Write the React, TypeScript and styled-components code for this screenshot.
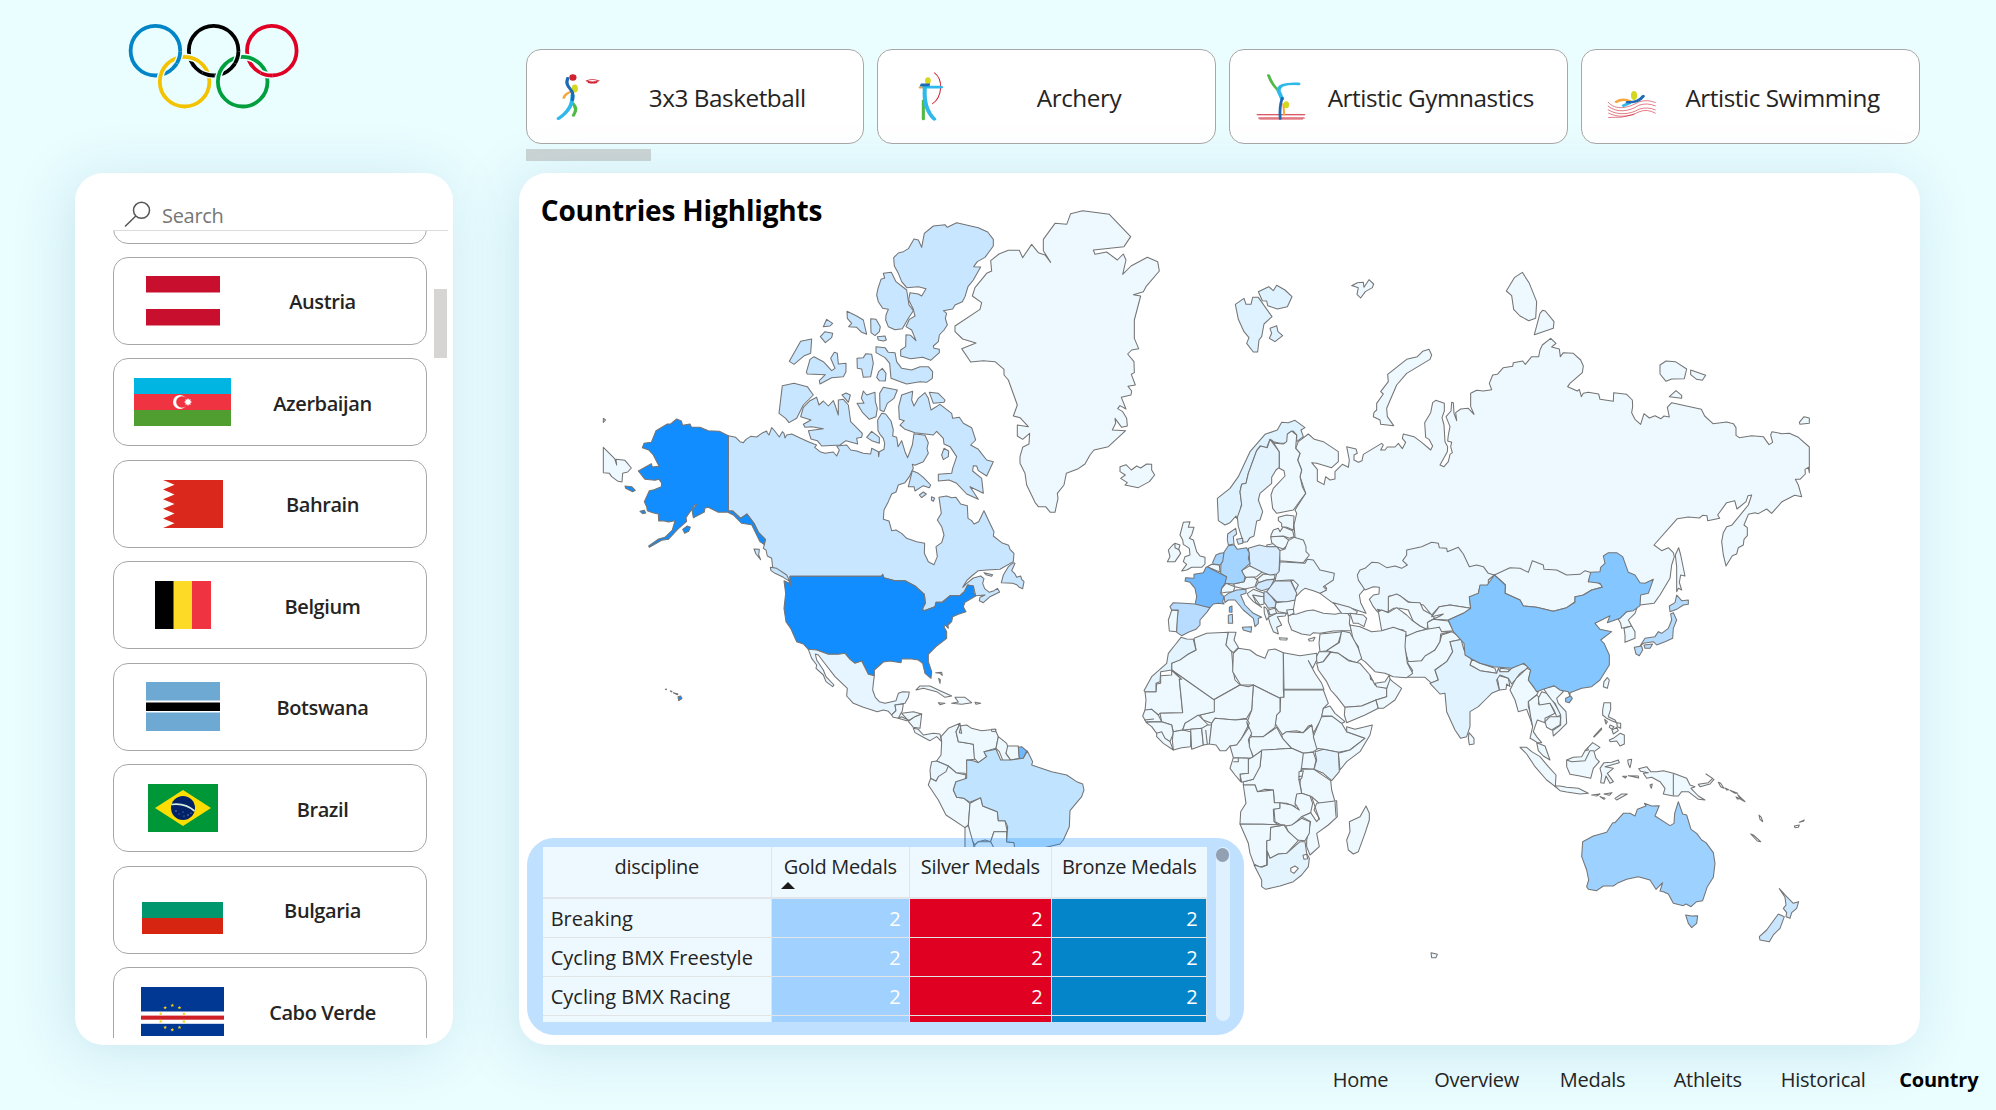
import React from "react";
import styled, { createGlobalStyle } from "styled-components";

const GlobalStyle = createGlobalStyle`
  * { box-sizing: border-box; }
  body {
    margin: 0;
    background: #eafdff;
    font-family: "Open Sans", "Noto Sans", sans-serif;
    color: #252423;
    overflow: hidden;
  }
`;

const Page = styled.main`
  width: 1996px;
  height: 1110px;
  padding-left: 75px;
  display: grid;
  grid-template-columns: 377.7px 66px 1401.3px;
  grid-template-rows: 173px 872px 65px;
  overflow: hidden;
`;

const LogoCell = styled.div`
  padding: 22px 0 0 51px;
`;

const DisciplineStrip = styled.div`
  grid-column: 3;
  padding: 49px 0 0 7px;
`;

const DisciplineRow = styled.div`
  display: grid;
  grid-template-columns: repeat(4, 338.6px);
  column-gap: 13.2px;
`;

const DisciplineCard = styled.button`
  height: 95px;
  padding: 0 0 0 21px;
  display: grid;
  grid-template-columns: 60px 239px;
  align-items: center;
  background: #fff;
  border: 1px solid #a9a7a5;
  border-radius: 15px;
  font: inherit;
  color: inherit;
`;

const DisciplineName = styled.span`
  padding-top: 2px;
  font-size: 24.3px;
  letter-spacing: -0.45px;
  white-space: nowrap;
  text-align: center;
`;

const HorizontalThumb = styled.div`
  width: 125px;
  height: 12px;
  margin-top: 5px;
  background: #cdd5d5;
`;

const Panel = styled.section`
  background: #fff;
  border-radius: 28px;
  box-shadow: -6px 6px 56px rgba(40, 120, 160, 0.17);
`;

const CountryPanel = styled(Panel)`
  grid-row: 2;
  grid-column: 1;
  padding: 21px 5px 7px 38px;
  display: grid;
  grid-template-rows: 37px 807px;
`;

const SearchBar = styled.label`
  display: flex;
  align-items: center;
  padding: 5px 0 0 11px;
  border-bottom: 1px solid #dcdcdc;
`;

const SearchText = styled.span`
  margin-left: 11px;
  padding-top: 3px;
  font-size: 20px;
  letter-spacing: -0.3px;
  line-height: 26px;
  color: #767676;
`;

const CountryScroll = styled.div`
  display: grid;
  grid-template-columns: 314px 14px;
  column-gap: 7px;
  overflow: hidden;
`;

const CountryList = styled.div`
  margin-top: -75.5px;
  height: 883px;
`;

const CountryCard = styled.button`
  width: 314px;
  height: 88px;
  margin-bottom: 13.45px;
  padding: 0;
  display: grid;
  grid-template-columns: 137px 142px;
  align-items: center;
  justify-items: center;
  background: #fff;
  border: 1px solid #a9a7a5;
  border-radius: 15px;
  font: inherit;
  color: inherit;
`;

const CountryName = styled.span`
  padding-top: 2px;
  padding-left: 1px;
  font-size: 20px;
  font-weight: 600;
  letter-spacing: -0.4px;
  white-space: nowrap;
`;

const VerticalThumb = styled.div`
  width: 13px;
  height: 69px;
  margin-top: 58px;
  background: #d6d5d4;
`;

const MapPanel = styled(Panel)`
  grid-row: 2;
  grid-column: 3;
  display: grid;
  grid-template: 872px / 1401px;
`;

const MapTitle = styled.h1`
  grid-area: 1 / 1;
  z-index: 1;
  margin: 17px 0 0 22px;
  font-size: 28px;
  line-height: 40px;
  font-weight: 700;
  letter-spacing: -0.15px;
  color: #000;
`;

const MapCanvas = styled.svg`
  grid-area: 1 / 1;
  stroke: #747474;
  stroke-width: 1.05;
  stroke-linejoin: round;
  path {
    vector-effect: non-scaling-stroke;
  }
`;

const TableCard = styled.div`
  grid-area: 1 / 1;
  align-self: end;
  z-index: 1;
  width: 717px;
  height: 197px;
  margin: 0 0 10px 8px;
  padding: 9px 14px 13px 16px;
  display: flex;
  gap: 9px;
  background: rgba(0, 130, 255, 0.25);
  border-radius: 27px;
`;

const MedalTable = styled.div`
  width: 664px;
  height: 175px;
  overflow: hidden;
  background: #eef9ff;
`;

const TableRow = styled.div<{ $head?: boolean }>`
  display: grid;
  grid-template-columns: 229px 138px 142px 155px;
  grid-template-rows: ${(p) => (p.$head ? "52px" : "39px")};
`;

const HeadCell = styled.div`
  padding-top: 6px;
  font-size: 20px;
  line-height: 28px;
  letter-spacing: -0.3px;
  text-align: center;
  white-space: nowrap;
  border-right: 1px solid #e2e4e6;
  border-bottom: 2px solid #e2e6ea;
  &:last-child { border-right: 0; }
`;

const SortMark = styled.span`
  display: block;
  width: 0;
  margin: 1px 0 0 9px;
  border: 7px solid transparent;
  border-top: 0;
  border-bottom: 7px solid #1b1a19;
`;

const NameCell = styled.div`
  padding: 2px 0 0 8px;
  font-size: 20px;
  line-height: 35px;
  white-space: nowrap;
  border-right: 1px solid #e2e4e6;
  border-bottom: 1px solid #e2e4e6;
`;

const MedalCell = styled.div<{ $tone: string }>`
  padding: 2px 8px 0 0;
  font-size: 20px;
  line-height: 35px;
  text-align: right;
  color: #fff;
  background: ${(p) => p.$tone};
  border-right: 1px solid #e2e4e6;
  border-bottom: 1px solid #e2e4e6;
`;

const TableTrack = styled.div`
  width: 14px;
  height: 174px;
  border-radius: 7px;
  background: #dff1ff;
`;

const TableThumb = styled.div`
  width: 13px;
  height: 14px;
  margin: 1px auto;
  border-radius: 7px;
  background: #91a0b2;
`;

const Nav = styled.nav`
  grid-row: 3;
  grid-column: 3;
  width: 670px;
  padding: 21px 0 0 0;
  margin-left: 814px;
  display: grid;
  grid-template-columns: 101.5px 125.5px 114px 107px 118.5px 90px;
`;

const NavItem = styled.a<{ $active?: boolean }>`
  font-size: 20px;
  line-height: 28px;
  letter-spacing: ${(p) => (p.$active ? "-0.2px" : "-0.25px")};
  font-weight: ${(p) => (p.$active ? 700 : 400)};
  color: ${(p) => (p.$active ? "#000" : "#252423")};
`;

/* Five interlaced rings */
const upperRings = [
  { x: 155.4, c: "#0085c7" },
  { x: 213.6, c: "#000000" },
  { x: 271.8, c: "#df0024" },
];
const lowerRings = [
  { x: 184.6, c: "#f4c300" },
  { x: 242.7, c: "#009f3d" },
];
const overlaps = [
  { ring: 0, x: 179.3, y: 57.5 },
  { ring: 1, x: 208.4, y: 74.8 },
  { ring: 1, x: 237.5, y: 57.5 },
  { ring: 2, x: 266.5, y: 74.8 },
];

function Ring({ x, y, c }: { x: number; y: number; c: string }) {
  return (
    <g fill="none">
      <circle cx={x} cy={y} r="24.8" stroke="#eafdff" strokeWidth="6.6" />
      <circle cx={x} cy={y} r="24.8" stroke={c} strokeWidth="3.8" />
    </g>
  );
}

function Logo() {
  return (
    <svg width="176" height="90" viewBox="126 22 176 90">
      {upperRings.map((r) => <Ring key={r.x} x={r.x} y={50.7} c={r.c} />)}
      {lowerRings.map((r) => <Ring key={r.x} x={r.x} y={81.7} c={r.c} />)}
      {overlaps.map((o, i) => (
        <g key={i}>
          <clipPath id={`over${i}`}><circle cx={o.x} cy={o.y} r="6.5" /></clipPath>
          <g clipPath={`url(#over${i})`}>
            <Ring x={upperRings[o.ring].x} y={50.7} c={upperRings[o.ring].c} />
          </g>
        </g>
      ))}
    </svg>
  );
}

/* Sport pictograms */
const RED = "#cf2130", LIME = "#d3d81f", BLUE = "#1d69b5", SKY = "#2fb9ea", ORANGE = "#f7a63b", GREEN = "#52b947";

const sports = [
  {
    name: "3x3 Basketball",
    art: (
      <g transform="translate(-47.8 -46.5) scale(.4783 .3333)">
        <ellipse cx="152" cy="171" rx="7.5" ry="10" fill={RED} />
        <path d="M180 181Q193 174 206 181Q193 188 180 181M184 186Q193 189 202 186" stroke={RED} strokeWidth="2.5" />
        <ellipse cx="156" cy="204" rx="6.5" ry="12" fill={LIME} />
        <path d="M133 232C135 222 141 217 147 214" stroke={ORANGE} strokeWidth="6" />
        <path d="M150 247C162 262 158 272 153 285" stroke={GREEN} strokeWidth="7" />
        <path d="M151 224C152 256 137 280 122 294" stroke={SKY} strokeWidth="8.5" />
        <path d="M141 173C135 197 149 204 151 217Q153 228 151 238" stroke={BLUE} strokeWidth="7" />
      </g>
    ),
  },
  {
    name: "Archery",
    art: (
      <g transform="translate(-399.9 -46.5) scale(.4783 .3333)">
        <path d="M910 157C930 178 926 230 906 250" stroke={RED} strokeWidth="2.2" />
        <ellipse cx="896.5" cy="181" rx="6" ry="11" fill={LIME} />
        <path d="M880 201L888 201" stroke={ORANGE} strokeWidth="6" />
        <path d="M887 240L887 296" stroke={GREEN} strokeWidth="6.5" />
        <path d="M890 204C888 244 894 274 910 296" stroke={SKY} strokeWidth="8.5" />
        <path d="M889 200H924" stroke={SKY} strokeWidth="8" />
        <path d="M879 198L882 189L901 189L900 197Z" fill={BLUE} />
      </g>
    ),
  },
  {
    name: "Artistic Gymnastics",
    art: (
      <g transform="translate(-51 -46.5) scale(.5076 .3333)">
        <path d="M113 283H206M116 292.5H205" stroke={RED} strokeWidth="3" />
        <path d="M118 296H202" stroke={RED} strokeWidth="1.5" />
        <path d="M135 164Q141 190 153 208" stroke={GREEN} strokeWidth="6" />
        <path d="M194 190Q153 187 155 212L162 236" stroke={SKY} strokeWidth="8" />
        <path d="M164 250L166 283" stroke={ORANGE} strokeWidth="4" />
        <ellipse cx="170" cy="253" rx="5.5" ry="10.5" fill={LIME} />
        <path d="M162 232Q156 260 158 295" stroke={BLUE} strokeWidth="5.5" />
      </g>
    ),
  },
  {
    name: "Artistic Swimming",
    art: (
      <g transform="translate(-403.5 -46.5) scale(.5076 .3333)">
        <path d="M805 245C820 272 845 262 866 244Q882 236 898 246M805 257C822 278 846 274 866 254Q882 246 898 256M805 268C822 284 846 284 866 266Q882 258 898 268M806 278C824 292 846 290 866 274Q882 264 898 278M806 291Q832 294 856 282" stroke={RED} strokeWidth="1.4" />
        <ellipse cx="856" cy="225" rx="6" ry="13.5" fill={LIME} />
        <path d="M821 244Q834 233 848 242" stroke={ORANGE} strokeWidth="7" />
        <path d="M836 255L846 248" stroke={SKY} strokeWidth="8" />
        <path d="M843 245Q864 247 874 227" stroke={BLUE} strokeWidth="7" />
      </g>
    ),
  },
];

function SportIcon({ children }: { children: React.ReactNode }) {
  return (
    <svg width="60" height="60" viewBox="0 0 60 60" fill="none" strokeLinecap="round">
      {children}
    </svg>
  );
}

/* National flags */
function star(cx: number, cy: number, r: number, n: number, inner: number) {
  const pts: string[] = [];
  for (let i = 0; i < n * 2; i++) {
    const a = (Math.PI * i) / n - Math.PI / 2;
    const q = i % 2 ? r * inner : r;
    pts.push(`${(cx + q * Math.cos(a)).toFixed(2)},${(cy + q * Math.sin(a)).toFixed(2)}`);
  }
  return pts.join(" ");
}

const countries: { name: string; w: number; h: number; flag: React.ReactNode }[] = [
  {
    name: "Austria", w: 74, h: 50,
    flag: <><rect width="74" height="16.5" fill="#c8102e" /><rect y="33" width="74" height="16.5" fill="#c8102e" /></>,
  },
  {
    name: "Azerbaijan", w: 97, h: 48,
    flag: (
      <>
        <rect width="97" height="16" fill="#00b5e2" />
        <rect y="16" width="97" height="16" fill="#ef3340" />
        <rect y="32" width="97" height="16" fill="#509e2f" />
        <circle cx="46" cy="24" r="7" fill="#fff" />
        <circle cx="48" cy="24" r="5.8" fill="#ef3340" />
        <polygon points={star(54, 24, 4, 8, 0.6)} fill="#fff" />
      </>
    ),
  },
  {
    name: "Bahrain", w: 81, h: 48,
    flag: <path d="M81 0H21L32.5 4.8L21 9.6L32.5 14.4L21 19.2L32.5 24L21 28.8L32.5 33.6L21 38.4L32.5 43.2L21 48H81Z" fill="#da291c" />,
  },
  {
    name: "Belgium", w: 56, h: 48,
    flag: <><rect width="19" height="48" /><rect x="18.5" width="19" height="48" fill="#fdda25" /><rect x="37" width="19" height="48" fill="#ef3340" /></>,
  },
  {
    name: "Botswana", w: 74, h: 49,
    flag: <><rect width="74" height="18.5" fill="#6da9d2" /><rect y="20.5" width="74" height="8.5" /><rect y="30.5" width="74" height="18.5" fill="#6da9d2" /></>,
  },
  {
    name: "Brazil", w: 70, h: 48,
    flag: (
      <>
        <rect width="70" height="48" fill="#009739" />
        <path d="M7 24L35 6L63 24L35 42Z" fill="#fedd00" />
        <circle cx="35" cy="24" r="12" fill="#012169" />
        <path d="M23.3 20.5Q37 18.5 46.5 27" stroke="#d5ecd9" strokeWidth="1.7" fill="none" />
        <g fill="#8c9cc4">
          <circle cx="28" cy="27" r=".7" /><circle cx="35" cy="28" r=".6" /><circle cx="31" cy="30" r=".6" />
          <circle cx="40" cy="31" r=".7" /><circle cx="36" cy="32" r=".6" /><circle cx="43" cy="29" r=".6" />
        </g>
      </>
    ),
  },
  {
    name: "Bulgaria", w: 81, h: 48,
    flag: <><rect y="16" width="81" height="16" fill="#00966e" /><rect y="32" width="81" height="16" fill="#d62612" /></>,
  },
  {
    name: "Cabo Verde", w: 83, h: 49,
    flag: (
      <>
        <rect width="83" height="49" fill="#003893" />
        <rect y="24.5" width="83" height="12.3" fill="#fff" />
        <rect y="28.6" width="83" height="4.1" fill="#cf2027" />
        {Array.from({ length: 10 }, (_, i) => {
          const a = (i * Math.PI) / 5 - Math.PI / 2;
          return <polygon key={i} points={star(31.3 + 12.2 * Math.cos(a), 30.6 + 12.2 * Math.sin(a), 2, 5, 0.42)} fill="#f7d116" />;
        })}
      </>
    ),
  },
];

/* World map: each group of outlines has its own origin and is drawn at three units to the pixel */
const LAND = "#eef9ff", USA = "#118dff", CAN = "#c8e6ff", CHN = "#84c6ff", FRA = "#70b9ff", GER = "#a3d3ff",
  AUS = "#9dd1ff", BRA = "#c0e4ff", JPN = "#b5dcff", ESP = "#b8dcff", NOR = "#def2ff", SWE = "#e3f4ff",
  POL = "#d8edff", NZL = "#cae6ff", IND = "#e1f3ff", PALE = "#e8f6ff";

type MapGroup = { origin: [number, number]; fills: [string, string[]][]; lines?: string[] };

const mapGroups: MapGroup[] = [
  {
    origin: [590, 190],
    fills: [
      [CAN, [
        "415 737 437 742 450 755 460 758 468 748 482 739 500 741 515 730 530 723 532 729 537 735 545 713 552 720 568 741 577 725 582 730 585 744 590 735 605 732 632 745 655 755 672 762 680 765 674 772 690 785 705 790 730 786 740 798 748 780 740 768 770 765 782 780 800 783 820 790 842 792 845 775 865 785 866 800 868 785 882 778 884 760 880 745 870 733 864 722 863 690 875 670 887 672 903 693 910 720 908 738 920 742 924 770 935 752 945 785 953 803 967 765 972 731 1005 736 1015 758 1011 775 1015 790 1000 815 975 826 967 823 970 835 958 860 945 878 925 885 918 906 905 912 895 935 882 960 880 988 897 993 905 1022 918 1020 935 1030 950 1045 980 1055 1004 1060 1003 1090 1015 1115 1032 1124 1042 1100 1038 1070 1055 1058 1062 1035 1055 1010 1042 990 1054 970 1047 922 1070 918 1085 923 1098 922 1112 942 1132 947 1134 985 1145 992 1152 1002 1166 995 1182 962 1195 990 1212 1025 1210 1038 1235 1058 1256 1066 1260 1078 1272 1090 1270 1115 1230 1138 1190 1140 1165 1142 1145 1158 1130 1172 1118 1192 1130 1180 1150 1164 1172 1158 1182 1166 1178 1180 1184 1196 1198 1207 1212 1202 1222 1195 1229 1206 1200 1220 1180 1238 1168 1232 1170 1222 1185 1215 1157 1217 1150 1188 1133 1185 1123 1205 1110 1217 1080 1217 1055 1237 1038 1237 1035 1250 1000 1263 998 1255 1006 1240 1003 1213 975 1188 945 1172 915 1172 880 1163 878 1153 875 1159 600 1159 600 1185 597 1170 585 1155 548 1132 545 1105 532 1098 528 1080 520 1075 523 1064 526 1048 506 1028 492 1000 471 972 452 985 428 963 415 962",
        "541 1132 560 1135 590 1155 600 1175 580 1162 555 1150 543 1142", "492 1077 508 1078 506 1095 512 1109 498 1092",
        "1234 1178 1240 1155 1255 1130 1270 1118 1275 1120 1265 1142 1275 1152 1280 1162 1292 1158 1295 1168 1302 1175 1298 1196 1288 1192 1280 1184 1268 1180",
        "1182 1148 1208 1154 1205 1159 1188 1154",
        "1100 98 1165 113 1193 126 1210 148 1210 168 1185 202 1162 215 1151 230 1172 231 1150 270 1134 290 1125 320 1117 335 1095 345 1088 357 1060 362 1070 370 1066 385 1072 405 1062 420 1048 435 1045 455 1030 468 1032 475 1048 478 1048 488 1022 511 998 502 962 506 932 498 932 480 947 470 948 434 962 436 978 452 965 420 948 410 958 388 975 378 970 358 956 330 960 308 985 312 995 318 1008 296 985 290 950 293 935 275 925 250 913 228 911 203 925 189 940 185 955 176 972 147 985 150 995 172 1003 130 1030 108 1065 104 1072 112",
        "880 250 904 247 918 275 950 300 957 345 970 362 955 385 937 416 915 419 895 410 887 390 888 375 895 358 878 355 865 335 860 315 864 295 873 268 884 264",
        "771 364 800 378 820 390 830 433 815 427 800 412 776 410 785 400 772 385", "842 386 858 388 871 410 868 425 855 437 843 428",
        "862 440 885 438 889 450 880 453 865 450", "710 388 728 400 720 408 700 410", "705 425 728 430 725 443 706 458 691 440",
        "632 454 665 447 662 490 643 497 612 523 598 514",
        "672 500 700 515 725 542 735 535 722 505 733 487 742 490 745 522 768 520 768 545 760 560 725 563 690 582 688 572 706 554 652 552 649 547 660 508",
        "801 505 820 503 828 491 845 493 850 520 842 560 820 562 815 537 802 535",
        "858 470 885 473 895 487 915 488 920 515 935 535 965 540 990 530 1015 530 1028 545 1027 565 1010 577 990 575 950 582 925 573 903 565 899 520 885 503 858 488",
        "877 535 888 550 886 573 868 572 860 562 866 545", "577 587 612 580 652 590 670 615 640 645 620 685 597 698 587 685 567 670",
        "680 622 687 645 700 633 715 648 730 632 735 645 745 675 745 630 760 628 775 645 782 695 817 730 815 742 800 745 803 762 768 752 750 765 695 768 682 752 663 747 655 722 700 716 665 710 645 712 640 703 663 690 632 680 640 652 660 632",
        "756 615 768 609 781 615 775 637 765 625", "820 603 830 615 855 607 856 635 862 655 858 680 838 688 818 668 801 640 822 640 814 625",
        "880 592 922 600 912 625 892 640 882 665 870 660 869 610", "830 742 845 724 868 742 868 760 845 752",
        "968 604 965 630 972 648 985 625 1005 608 1015 625 1023 660 1050 643 1085 670 1088 685 1108 682 1120 700 1145 713 1157 750 1142 765 1165 778 1190 810 1210 815 1190 858 1165 842 1160 828 1150 827 1148 843 1175 865 1180 910 1140 890 1165 928 1130 912 1100 880 1077 870 1045 873 1045 853 1085 850 1088 835 1100 800 1080 770 1062 762 1060 745 1040 724 1030 735 975 728 945 718 930 705 943 692 928 688 926 650 935 615",
        "1018 607 1045 610 1065 630 1062 637 1030 640", "1062 775 1076 783 1075 800 1060 809 1055 795",
        "967 842 985 850 1000 862 1022 885 1018 893 1000 887 975 903 972 890 955 890", "988 915 1000 906 1009 912 995 923", "1025 920 1034 925 1030 934 1024 930",
      ]],
      [USA, [
        "260 687 274 693 278 706 300 702 304 711 330 712 355 722 388 724 415 737 415 962 428 963 452 985 471 972 492 1000 506 1028 526 1048 523 1064 510 1055 485 1004 455 1000 430 975 412 966 385 967 355 952 345 954 343 966 310 983 306 960 320 944 313 945 304 960 288 983 290 994 262 1019 235 1048 215 1051 178 1072 176 1068 206 1047 225 1042 247 1020 255 992 235 996 220 992 206 993 205 972 188 968 172 962 170 950 163 935 178 902 192 899 214 890 215 880 207 868 195 871 165 868 145 843 184 821 187 831 207 829 190 795 176 780 157 773 162 760 184 757 198 722 232 702 242 702",
        "278 1018 292 1008 301 1012 296 1024 284 1030", "105 888 125 890 136 901 128 905 107 895", "150 964 163 961 167 969 158 971",
        "582 1172 598 1180 601 1188 600 1159 875 1159 878 1153 882 1163 915 1172 945 1172 975 1188 1003 1213 1006 1240 998 1255 1000 1263 1035 1250 1038 1237 1058 1237 1080 1217 1110 1217 1123 1205 1133 1185 1150 1188 1152 1208 1157 1218 1125 1237 1120 1250 1128 1265 1105 1273 1088 1280 1085 1295 1075 1305 1072 1293 1075 1315 1065 1305 1062 1310 1070 1325 1070 1345 1040 1368 1015 1393 1015 1415 1025 1445 1023 1465 1005 1450 998 1420 985 1410 960 1406 935 1407 933 1418 900 1413 880 1416 870 1425 853 1440 853 1457 835 1453 815 1413 795 1420 780 1408 765 1390 745 1393 715 1393 680 1380 655 1378 640 1362 620 1355 603 1317 588 1295 582 1255 587 1210",
        "264 1520 272 1518 276 1526 266 1532", "226 1498 229 1497 229 1499", "241 1503 246 1504 244 1506", "250 1508 264 1512 262 1514",
      ]],
      [LAND, ["40 772 74 806 80 825 78 808 105 811 124 834 113 846 98 850 96 876 84 874 65 860 58 850 40 848", "40 685 47 690 40 697"]],
      ["#e6f5ff", ["655 1378 680 1380 715 1393 745 1393 765 1390 780 1408 795 1420 815 1413 835 1453 853 1457 850 1480 848 1500 856 1522 868 1535 885 1540 918 1532 925 1510 938 1505 958 1506 955 1522 945 1540 915 1545 918 1562 905 1575 895 1564 880 1560 862 1565 820 1552 790 1540 770 1518 772 1495 735 1460 708 1425 685 1395 676 1392 680 1410 700 1440 708 1460 732 1485 728 1490 708 1475 700 1455 678 1435 680 1425 665 1405"]],
      [LAND, [
        "905 1575 918 1562 915 1545 940 1542 937 1562 925 1585 910 1582", "935 1570 970 1565 995 1572 975 1580 955 1592", "955 1594 975 1580 995 1572 990 1615 970 1612",
        "925 1585 935 1580 955 1590 950 1592", "970 1615 985 1618 1000 1635 1030 1630 1050 1632 1055 1655 1040 1640 1020 1652 1000 1642 975 1628",
        "978 1500 990 1488 1020 1488 1050 1502 1085 1518 1065 1522 1040 1505 1000 1495", "1095 1522 1125 1522 1145 1538 1115 1543 1085 1540 1105 1536",
        "1045 1538 1065 1540 1050 1544", "1155 1537 1172 1540 1158 1543", "1037 1448 1055 1447 1057 1456 1050 1450", "1046 1465 1051 1470 1050 1480",
        "1055 1655 1053 1640 1075 1615 1110 1600 1098 1625 1105 1655 1125 1658 1150 1663 1155 1708 1130 1710 1133 1765 1125 1750 1098 1748 1075 1728 1040 1713 1053 1695",
        "1110 1602 1115 1630 1108 1628 1113 1607 1130 1605 1145 1615 1175 1622 1195 1620 1215 1618 1225 1640 1218 1675 1182 1685 1190 1700 1165 1718 1153 1705 1150 1663 1125 1658 1105 1655 1098 1625",
        "1205 1618 1218 1618 1216 1625 1205 1624",
        "1225 1640 1250 1660 1255 1675 1248 1690 1262 1710 1240 1715 1228 1685 1218 1675", "1253 1668 1285 1668 1288 1705 1262 1710 1248 1690",
        "1022 1765 1038 1773 1045 1758 1075 1728 1098 1748 1128 1755 1125 1770 1098 1775 1090 1800 1100 1822 1122 1825 1140 1840 1135 1905 1125 1913 1068 1875 1045 1830 1015 1785",
        "1140 1840 1172 1823 1178 1848 1222 1865 1225 1892 1245 1892 1252 1925 1212 1925 1202 1955 1185 1950 1165 1955 1155 1965 1142 1945 1135 1905",
        "1125 1913 1135 1907 1150 1960 1155 1990 1125 1990", "1155 1965 1165 1955 1202 1955 1220 1975 1220 1990 1150 1990", "1202 1955 1212 1925 1250 1925 1250 1955 1275 1958 1275 1990 1220 1990",
      ]],
      [PALE, ["1025 1715 1040 1713 1075 1728 1068 1745 1045 1760 1038 1773 1022 1765 1020 1740"]],
      [FRA, ["1285 1672 1295 1670 1310 1683 1300 1705 1288 1705"]],
      [BRA, ["1130 1710 1150 1712 1165 1718 1190 1700 1182 1685 1218 1678 1232 1710 1262 1710 1300 1705 1312 1683 1328 1715 1325 1725 1345 1732 1385 1745 1430 1755 1460 1775 1478 1782 1482 1800 1475 1820 1440 1862 1438 1910 1420 1950 1410 1962 1375 1970 1300 1990 1275 1990 1272 1958 1250 1955 1253 1910 1245 1892 1225 1892 1222 1865 1178 1848 1172 1823 1140 1837 1122 1825 1100 1822 1090 1800 1098 1775 1130 1765"]],
    ],
  },
  {
    origin: [930, 190],
    fills: [
      [LAND, [
        "458 62 538 73 602 140 582 170 490 180 495 193 530 186 562 210 580 192 588 210 578 253 603 228 652 202 683 215 688 243 648 290 640 305 610 314 632 318 613 390 613 445 626 476 605 480 593 492 612 515 613 548 604 553 616 585 594 589 605 603 603 615 574 622 588 657 570 647 563 656 578 665 590 685 592 708 575 712 555 685 557 700 547 720 587 722 535 770 492 780 480 795 465 822 445 836 409 850 402 885 382 910 384 925 375 967 361 967 347 950 325 950 315 937 290 885 285 850 270 820 270 800 278 772 297 762 299 730 278 748 262 738 262 705 295 710 270 683 250 678 262 645 235 570 222 555 222 538 195 515 160 512 122 516 95 476 138 459 98 447 75 425 75 408 150 358 155 338 127 318 135 293 170 250 185 243 182 212 207 192 235 181 268 181 278 203 305 163 325 188 345 195 362 217 340 182 340 148 375 100 410 103 422 71",
        "570 845 570 830 588 824 604 840 620 828 632 834 650 822 665 823 665 840 674 855 658 875 625 893 585 885 592 878 572 865 586 855",
      ]],
      [NOR, [
        "916 343 942 325 948 343 963 343 968 322 985 322 1026 380 1002 402 995 440 987 450 983 486 970 486 950 460 957 443 942 425 925 388",
        "985 305 1016 290 1030 302 1040 286 1065 300 1086 320 1072 350 1042 357 1013 347 1010 333 997 332", "1020 415 1040 407 1044 425 1058 437 1035 455 1018 445 1025 430",
      ]],
    ],
  },
  {
    origin: [1340, 250],
    fills: [
      [LAND, [
        "-125 575 -95 552 -77 568 -50 575 -5 605 -5 635 -25 653 -70 640 -85 638 -68 658 -68 693 -48 704 -43 680 -30 690 -15 687 -15 665 7 643 25 652 28 630 20 590 48 597 52 610 42 615 42 630 55 637 66 632 70 613 125 580 130 585 122 600 135 600 142 591 165 591 175 580 187 596 197 577 187 565 190 552 222 560 245 577 272 600 278 588 267 568 257 562 254 518 272 488 278 458 287 451 313 460 313 483 306 503 312 525 315 575 323 590 322 605 300 645 312 650 325 635 330 613 337 608 332 590 335 577 323 573 325 555 330 530 318 500 333 483 335 457 340 458 342 490 350 512 347 488 362 477 385 475 402 493 392 470 392 430 410 421 430 423 455 419 448 400 458 375 472 373 490 353 518 349 520 338 548 333 556 343 575 320 596 320 600 300 607 285 632 265 648 280 635 291 658 297 661 320 670 308 700 310 722 330 730 348 727 368 690 400 683 410 712 423 718 418 724 440 730 430 745 427 776 432 780 448 820 454 821 428 860 433 877 450 878 470 875 488 885 508 902 523 912 491 928 504 945 497 963 506 972 498 988 501 982 472 995 458 1084 478 1094 498 1119 521 1160 516 1180 521 1188 533 1188 556 1198 563 1235 557 1270 560 1287 584 1298 577 1292 555 1296 545 1325 551 1348 550 1375 562 1408 591 1408 668 1405 652 1395 658 1396 672 1380 688 1366 688 1375 705 1385 740 1364 736 1326 755 1295 790 1280 777 1255 791 1245 788 1225 793 1212 825 1222 833 1222 857 1212 868 1210 885 1195 893 1190 912 1177 917 1158 948 1150 915 1145 875 1150 848 1160 830 1175 826 1225 765 1235 735 1224 737 1218 755 1191 777 1184 752 1160 758 1133 795 1139 805 1103 812 1101 797 1088 796 1078 804 1045 801 1012 806 942 885 965 902 985 893 1000 908 1003 920 995 945 990 985 960 1035 942 1060 900 1065 870 1040 800 1000 463 975 200 1000 55 990 75 1015 58 1035 62 1058 78 1090 30 1073 -20 1060 -60 1030 -40 1015 -100 935 -135 860 -138 825 -130 790 -135 780 -103 730 -120 680 -115 660 -127 630 -120 610 -133 595",
        "267 298 275 315 270 328 200 370 170 405 140 475 142 500 161 527 122 523 120 510 100 500 102 487 110 480 110 460 130 432 122 425 145 395 143 373 200 328 232 320 248 304",
        "547 67 568 100 590 155 587 205 566 212 540 198 521 178 515 137 499 123 524 82", "608 181 616 183 642 215 640 235 583 254 600 190",
        "35 107 52 98 70 97 72 112 87 89 101 102 97 113 76 125 62 144 51 133 55 113 40 108", "960 345 978 333 1006 335 1040 357 1033 386 995 387 978 394 960 372",
        "1052 360 1097 376 1087 391 1070 388 1052 374", "988 440 1008 422 1025 436 1025 445", "1378 517 1392 500 1408 504 1408 520 1380 523",
        "1016 893 1022 915 1035 978 1022 975 1018 997 1025 1020 1015 1015 1010 1025 1010 950 1006 915",
      ]],
      ["#eaf7ff", ["55 990 52 975 60 960 75 955 95 937 115 938 140 953 165 948 185 955 202 945 188 932 200 915 200 900 245 890 275 877 295 880 298 893 320 895 322 905 355 892 370 912 388 950 410 945 430 950 445 970 463 975 445 990 445 1008 420 1008 413 1038 388 1040 392 1075 330 1065 298 1070 275 1095 250 1065 205 1055 180 1038 147 1038 145 1085 125 1090 112 1085 100 1070 88 1048 100 1035 117 1032 118 1012 100 1010 75 1020"]],
    ],
  },
  {
    origin: [1120, 380],
    fills: [
      [NOR, ["292 355 330 325 355 290 390 215 435 163 472 150 485 127 505 128 525 121 555 143 543 150 550 170 530 185 530 165 520 153 508 158 500 190 480 190 460 185 450 178 440 203 420 198 410 212 385 280 378 310 365 313 360 335 365 370 358 410 350 415 348 408 330 428 315 435 295 422"]],
      [SWE, ["450 178 478 215 478 262 468 270 455 292 455 310 420 340 415 360 428 395 420 420 410 423 402 468 390 473 382 485 370 487 355 440 352 412 365 375 360 335 365 313 378 310 385 280 410 212 422 198 442 203"]],
      [LAND, [
        "455 180 465 190 490 192 500 185 502 162 515 153 530 165 527 205 540 220 533 240 545 270 540 290 547 320 557 340 520 390 470 400 458 385 453 345 460 325 495 288 492 272 478 265 478 215",
        "190 427 210 425 205 442 222 442 215 465 208 475 220 480 230 515 240 528 255 532 255 552 245 562 215 562 200 570 185 573 200 553 190 545 195 530 210 525 208 505 190 493 188 480 180 465",
        "165 490 180 495 176 508 182 520 165 545 142 545 150 530 145 510 158 495", "262 560 275 553 298 555 300 575 290 572",
        "155 690 175 692 170 755 148 753 145 720 152 700", "305 625 318 610 345 620 340 635 318 637 302 640", "340 612 372 605 378 592 400 590 412 600 405 620 375 627 345 620",
        "365 572 390 557 410 565 428 575 410 590 378 592 370 585", "440 495 465 490 470 500 442 500", "452 470 490 468 508 482 500 498 490 507 470 500 455 488",
        "453 465 460 450 475 445 480 455 490 440 518 452 522 470 508 475 490 468 453 470", "475 412 500 405 522 408 520 450 500 442 485 440 485 430 475 422",
        "505 482 522 472 550 480 558 500 558 515 568 525 550 548 480 542 478 512 495 507", "412 597 430 582 465 585 463 597 440 600 415 608", "512 600 525 602 538 618 528 635",
        "468 668 525 660 520 690 500 700 475 695 465 682", "398 645 432 650 432 672 420 675", "382 640 400 628 432 640 432 650 398 645 408 668 425 682 400 665 385 648",
        "432 680 440 685 448 710 440 720 433 700", "445 690 465 685 470 700 450 705", "478 773 502 775 500 780 480 779", "565 778 585 772 580 782 568 783",
        "505 705 530 702 560 692 580 690 610 700 645 703 680 695 690 710 688 730 695 752 665 752 640 753 600 760 580 758 570 766 545 762 515 750 505 725", "500 690 520 688 522 700 505 708",
        "640 668 690 682 712 695 708 702 665 700", "690 700 730 705 740 715 732 740 715 730 700 730 695 715", "772 688 800 695 785 708",
      ]],
      ["#e8f6ff", ["480 545 555 550 562 538 580 540 600 570 643 580 640 600 610 620 620 630 600 640 580 632 555 625 545 632 530 648 522 640 535 615 520 600 505 600 465 603 470 580 478 570", "445 712 470 700 500 700 495 708 472 710 485 735 470 742 475 762 460 755 450 730"]],
      ["#cfe8ff", ["323 462 347 445 350 462 340 470 342 492 325 495 322 480", "350 478 368 475 368 490 355 493", "408 618 415 608 440 600 463 598 450 625 425 632 408 625", "432 635 440 635 455 650 468 668 465 682 445 685 432 665"]],
      [POL, ["385 505 418 495 440 500 470 500 480 512 477 575 470 582 450 585 430 578 390 558 388 530"]],
      ["#def0ff", ["455 615 465 603 512 603 530 640 525 660 500 665 470 665 455 650 440 635"]],
      [GER, ["325 497 342 494 352 508 380 503 388 520 385 535 390 550 365 572 375 590 372 605 340 612 315 610 318 590 302 580 303 545 310 520", "300 520 312 518 308 545 300 555 280 552 278 547 288 525"]],
      [FRA, ["262 560 275 568 290 575 320 590 315 610 305 625 302 640 312 650 308 665 312 672 295 670 280 672 270 683 240 680 225 675 230 650 225 625 210 607 195 603 197 593 222 595 222 583 250 578 258 562", "328 682 336 678 336 697 328 696"]],
      [ESP, ["150 680 160 668 190 670 225 672 270 683 262 695 240 720 240 735 228 748 205 757 185 767 170 757 172 715 175 690 155 690"]],
      [JPN, ["312 650 325 640 350 630 378 628 378 640 362 645 375 675 400 700 425 712 415 715 415 730 405 740 400 715 370 690 345 660 325 660 315 668", "367 742 395 740 393 757 370 750", "325 706 337 703 338 730 325 730"]],
    ],
    lines: ["165 490 165 503 178 510"],
  },
  {
    origin: [1400, 540],
    fills: [
      [LAND, [
        "-35 170 -10 162 0 167 25 187 60 188 70 210 92 222 105 235 85 245 80 272 40 245 25 210 0 205 -20 205 -35 215", "-65 215 -55 210 -35 218 -10 203 20 225 35 240 60 258 80 268 50 275 40 290 25 297 10 270 -25 265 -55 272",
        "95 230 118 200 150 195 212 205 190 220 145 240 100 238 120 228 130 222", "82 248 100 238 145 243 160 272 120 275 118 262 85 272", "15 290 50 275 80 268 118 262 125 275 155 275 122 282 120 305 105 330 60 365 25 365 12 320",
        "20 365 65 362 75 348 105 330 120 305 125 285 155 275 190 297 150 305 158 335 140 365 105 390 115 420 95 430 75 412 20 412 38 392",
        "-150 255 -120 260 -85 275 -55 272 -20 262 18 275 15 320 22 370 38 400 20 413 -20 410 -45 400 -75 395 -105 365 -120 355 -125 320 -140 300",
        "290 405 325 415 330 440 320 432 318 448 298 450 295 430", "210 375 215 358 240 370 285 385 290 400 240 392", "300 385 328 388 325 395 300 395", "207 578 222 595 222 612 208 614 205 595",
        "365 400 380 385 392 390 385 420 400 440 415 455 410 465 385 485 385 500 395 530 398 560 392 540 380 508 365 512 355 515 345 480 330 450 340 430 348 415",
        "385 485 410 465 420 475 415 492 450 490 465 520 435 535 435 548 412 540 405 560 400 575 410 590 425 608 412 608 400 600 390 595 398 560 392 530",
        "425 455 440 460 455 475 460 485 485 525 470 530 462 510 450 490 418 495 415 475", "430 445 465 438 490 455 470 475 475 490 498 515 500 550 475 575 460 588 458 572 482 555 482 525 465 490 455 480 440 460",
        "435 545 450 530 482 530 480 555 455 570 440 562", "410 608 435 618 450 660 430 648 415 632", "622 413 628 420 622 445 610 440 612 425",
        "283 105 330 83 360 85 385 97 397 62 430 75 432 88 470 90 500 105 540 103 555 92 575 98 565 125 585 123 605 135 605 142 575 150 545 168 525 170 525 185 500 203 460 214 410 202 370 198 360 180 315 160 316 135 300 120",
        "655 238 680 215 712 200 705 220 685 240 695 258 665 265 662 250", "672 265 695 258 705 275 705 295 675 307 675 285",
        "612 488 632 488 632 508 625 530 645 540 650 548 635 542 620 535 608 525 608 510", "630 555 642 560 636 568 628 562", "650 548 662 550 662 565 652 560", "636 570 650 562 655 572 640 582", "614 538 622 545 618 552",
        "628 600 640 595 660 580 673 585 673 612 660 618 650 603 630 605", "581 590 604 564 605 568 583 591",
        "360 622 380 622 395 635 420 650 445 680 468 705 466 740 440 720 405 680 380 642", "464 738 480 738 500 742 535 745 565 760 540 762 500 756 480 752",
        "500 660 520 652 545 650 555 632 578 608 600 622 582 635 588 655 598 665 580 685 572 715 540 708 510 703 500 680",
        "600 685 612 668 635 667 655 660 658 668 615 680 640 685 622 700 640 725 630 730 618 708 612 730 602 728 605 705", "575 765 600 762 590 768", "600 770 615 775 612 778", "612 762 636 758 628 766", "645 775 665 762 682 762 650 780",
        "683 660 695 658 693 670 690 683 685 672", "685 707 715 708 716 714 700 710", "668 709 680 709 676 714", "750 735 757 732 754 745",
        "716 686 740 680 752 695 770 695 790 692 820 700 860 715 870 735 885 740 873 745 895 768 915 780 895 778 865 755 845 755 835 768 820 768 790 762 795 745 780 725 755 712 740 715 730 700 745 698 722 694",
        "895 733 925 728 938 715 918 702 942 718 930 732 900 740", "955 727 962 730 972 745 962 740", "975 744 986 749 980 750", "990 751 1013 760 1005 760", "1013 764 1035 785 1022 778", "1008 771 1020 776 1012 777",
        "1077 825 1080 838 1088 845 1084 832", "1183 858 1198 855 1195 862 1185 863", "1198 847 1213 840 1210 844", "1052 882 1060 885 1082 905 1072 903", "93 1238 112 1243 108 1253 95 1253",
      ]],
      [IND, ["190 297 185 305 192 330 215 360 210 375 240 392 290 400 295 385 300 395 325 395 340 380 365 370 385 380 375 390 360 400 345 420 335 432 325 415 300 405 290 420 298 450 275 460 255 480 235 500 210 515 210 560 200 590 182 595 165 570 140 515 135 460 120 462 90 430 115 420 105 390 140 365 158 335 150 305"]],
      [CHN, ["283 105 300 120 316 135 315 160 360 180 370 198 410 202 460 214 500 203 525 187 525 170 550 165 575 150 607 142 600 130 565 125 572 97 600 95 602 82 615 70 610 48 625 38 650 38 668 50 685 97 705 105 720 128 735 130 760 118 745 160 722 165 720 197 700 212 680 215 660 235 622 248 630 227 615 235 605 240 585 250 600 268 635 275 602 300 612 310 628 345 628 375 600 420 575 440 545 445 510 458 510 470 505 455 480 450 462 437 430 448 410 455 400 440 385 420 392 390 372 370 335 385 280 380 240 370 215 357 195 345 192 310 160 275 145 240 190 220 212 205 208 170 235 160 240 135 262 135", "497 475 512 468 517 475 508 488 497 485"]],
      [JPN, ["830 165 845 182 865 180 865 193 850 195 830 208 810 215 808 198 825 188", "820 218 830 240 820 265 818 295 795 305 770 315 760 305 730 310 720 318 735 295 765 290 775 275 785 280 805 265 815 240 812 222", "703 322 725 318 728 330 718 347 708 342", "732 315 758 312 750 325 735 325"]],
      [AUS, ["733 790 755 798 778 797 765 828 810 857 822 850 824 820 835 785 848 822 860 825 873 868 890 880 905 900 918 908 940 938 945 970 940 1012 922 1040 908 1082 890 1085 873 1100 858 1092 850 1097 820 1090 805 1062 790 1055 780 1053 788 1028 768 1048 750 1020 715 1010 680 1018 655 1028 640 1038 610 1038 590 1052 565 1048 560 1040 566 1020 560 990 545 950 548 905 580 888 620 877 638 848 645 848 670 820 690 820 705 828 712 808 738 798", "857 1125 875 1128 893 1127 890 1150 875 1163 865 1150"]],
      [NZL, ["1138 1046 1160 1070 1180 1090 1196 1085 1190 1105 1175 1118 1170 1135 1158 1130 1160 1118 1150 1105 1158 1095 1155 1072", "1135 1122 1153 1130 1140 1165 1120 1185 1108 1205 1080 1200 1078 1190 1100 1170"]],
    ],
    lines: ["820 702 820 767", "500 660 515 665 555 662 570 632 582 632", "555 632 565 630 562 622"],
  },
  {
    origin: [1120, 620],
    fills: [
      [LAND, [
        "600 42 640 38 665 35 655 68 620 92 600 95 597 70", "665 33 690 38 705 65 715 85 725 115 710 128 685 120 655 100 632 95 620 92 658 68", "597 95 620 95 632 95 610 125 592 130 588 112",
        "590 130 610 125 632 97 655 100 685 122 720 130 750 165 765 195 800 205 800 230 768 240 725 258 675 262 650 230 632 210 620 185 595 150", "675 262 725 258 768 240 775 265 735 285 680 308 673 285",
        "808 175 818 185 845 205 825 240 790 265 775 265 768 240 800 230 800 205", "765 190 795 185 808 165 810 178 800 205 770 200",
        "75 215 108 215 110 192 122 190 122 167 155 165 155 150 185 178 178 178 188 278 120 280 115 285 95 268 75 272 78 240",
        "155 150 155 130 205 102 228 90 222 55 260 40 325 37 318 75 335 95 340 155 345 180 360 195 280 240", "325 37 348 37 342 60 355 82 340 98 330 90 318 75",
        "340 100 355 85 390 90 410 105 435 115 445 90 465 87 490 98 490 208 492 232 480 235 400 195 362 195 338 155", "490 98 540 107 590 100 590 120 578 145 565 122 585 160 605 190 612 208 492 208",
        "492 210 610 210 625 250 610 265 605 295 580 340 575 315 565 318 550 338 530 332 500 335 488 345 465 310 470 285 480 275 482 232 492 232",
        "400 195 480 235 480 275 470 285 465 322 430 350 395 350 380 310 395 270", "280 240 360 195 385 200 400 195 395 270 380 295 345 300 285 295 275 310 250 300 240 285 280 275",
        "155 150 283 240 283 275 240 285 195 310 188 330 160 335 155 315 125 305 120 280 188 278 178 178 185 178", "68 288 75 270 95 268 115 285 125 305 78 305", "78 307 125 305 155 315 160 340 150 365 135 355 110 340 95 320",
        "110 340 125 335 135 355 150 365 160 390 130 370 110 350", "160 335 188 330 212 335 212 380 185 383 160 390 157 360", "188 330 195 310 235 285 265 315 250 325 212 328", "212 328 245 325 250 375 215 388",
        "245 325 262 315 275 315 268 372 250 375", "275 310 285 295 345 300 380 297 388 310 365 355 350 375 330 378 318 392 300 392 288 375 268 372", "380 305 395 340 385 360 400 415 340 413 330 378 350 375 365 355 385 325",
        "388 355 395 350 430 350 470 322 485 350 515 385 470 388 425 392 400 410 388 380", "485 345 500 335 550 338 575 315 582 355 595 385 580 395 550 400 515 385 488 355",
        "605 290 640 288 665 310 680 335 735 355 690 390 655 397 610 388 590 385 580 350", "610 265 630 258 645 280 675 305 665 310 635 288 605 288",
        "680 320 705 328 757 315 750 345 720 395 680 425 660 450 655 400 690 390 735 355 680 335", "548 400 580 397 588 420 582 448 540 445", "545 448 582 448 632 482 635 510 645 545 600 552 575 530 545 520 540 490",
        "425 390 470 388 515 385 550 400 545 440 537 480 545 520 530 525 525 560 500 550 463 548 460 510 435 508 412 515 405 495 370 495 370 485 400 478 405 455 420 440", "400 410 425 392 420 440 400 478 365 487 360 462 385 460 385 418",
        "340 413 385 415 385 460 360 462 362 485 345 465 330 445", "370 495 405 495 412 515 460 510 463 548 480 548 480 567 460 568 462 605 475 615 430 613 360 612 362 575 378 550",
        "462 568 480 565 480 548 515 555 538 570 525 550 530 522 545 520 570 528 578 550 572 578 545 590 515 618 490 618 465 605",
        "590 550 650 542 652 590 625 615 590 640 598 680 570 705 560 680 560 660 572 605 545 590 572 578 590 605 598 595 582 570", "497 618 515 615 545 595 570 605 568 640 555 662 530 660 505 635",
        "452 622 492 615 505 635 535 662 500 700 475 702 450 715 440 690 440 660 450 660", "360 612 430 613 495 615 452 622 450 660 440 662 440 735 420 742 402 732 390 700 385 670", "738 558 748 580 748 600 735 640 715 695 700 702 685 690 680 660 690 635 688 605 720 590",
        "537 455 550 452 545 475 537 480",
      ]],
      [SWE, [
        "183 52 200 57 220 58 228 90 205 102 180 120 155 130 155 150 122 155 120 185 108 190 108 215 75 215 72 212 95 170 140 130 145 100 165 75",
        "585 395 610 388 655 397 658 455 635 482 610 460 582 448 590 420",
        "402 735 425 742 442 735 442 695 450 715 475 702 500 700 540 665 555 665 560 700 568 715 565 740 545 765 520 785 480 798 437 808 425 800 425 780",
      ]],
      ["#ffffff", ["512 745 525 738 535 745 522 760 513 755", "549 706 560 703 563 716 552 718"]],
    ],
    lines: ["257 330 262 372", "72 300 102 297", "575 530 590 575 598 600", "645 545 648 590", "340 425 355 425 355 413", "750 165 752 178 760 182", "535 470 548 468"],
  },
];

const toPath = (pts: string, close: boolean) => {
  const n = pts.split(" ");
  let d = "";
  for (let i = 0; i < n.length; i += 2) d += `${i ? "L" : "M"}${n[i]} ${n[i + 1]}`;
  return close ? `${d}Z` : d;
};

function WorldMap() {
  return (
    <MapCanvas width="1401" height="872" viewBox="519 173 1401 872">
      {mapGroups.map((g, i) => (
        <g key={i} transform={`translate(${g.origin[0]} ${g.origin[1]}) scale(.33333)`}>
          {g.fills.map(([fill, shapes], j) => (
            <g key={j} fill={fill}>
              {shapes.map((s, k) => <path key={k} d={toPath(s, true)} />)}
            </g>
          ))}
          <g fill="none">
            {(g.lines || []).map((s, k) => <path key={k} d={toPath(s, false)} />)}
          </g>
        </g>
      ))}
    </MapCanvas>
  );
}

const medalTones = ["#a1d1ff", "#df0022", "#0485ca"];
const tableRows = ["Breaking", "Cycling BMX Freestyle", "Cycling BMX Racing"];
const navItems = ["Home", "Overview", "Medals", "Athleits", "Historical", "Country"];

export default function App() {
  return (
    <>
      <GlobalStyle />
      <Page>
        <LogoCell><Logo /></LogoCell>
        <DisciplineStrip>
          <DisciplineRow>
            {sports.map((s) => (
              <DisciplineCard key={s.name}>
                <SportIcon>{s.art}</SportIcon>
                <DisciplineName>{s.name}</DisciplineName>
              </DisciplineCard>
            ))}
          </DisciplineRow>
          <HorizontalThumb />
        </DisciplineStrip>

        <CountryPanel>
          <SearchBar>
            <svg width="27" height="27" viewBox="0 0 27 27" fill="none" stroke="#555" strokeWidth="1.5">
              <circle cx="17.5" cy="9.3" r="8" />
              <path d="M11.8 15L1 25.5" />
            </svg>
            <SearchText>Search</SearchText>
          </SearchBar>
          <CountryScroll>
            <CountryList>
              {/* Card scrolled out above the list: only its lower edge shows */}
              <CountryCard />
              {countries.map((c) => (
                <CountryCard key={c.name}>
                  <svg width={c.w} height={c.h} viewBox={`0 0 ${c.w} ${c.h}`}>{c.flag}</svg>
                  <CountryName>{c.name}</CountryName>
                </CountryCard>
              ))}
            </CountryList>
            <VerticalThumb />
          </CountryScroll>
        </CountryPanel>

        <MapPanel>
          <WorldMap />
          <MapTitle>Countries Highlights</MapTitle>
          <TableCard>
            <MedalTable>
              <TableRow $head>
                <HeadCell>discipline</HeadCell>
                <HeadCell>Gold Medals<SortMark /></HeadCell>
                <HeadCell>Silver Medals</HeadCell>
                <HeadCell>Bronze Medals</HeadCell>
              </TableRow>
              {tableRows.map((name) => (
                <TableRow key={name}>
                  <NameCell>{name}</NameCell>
                  {medalTones.map((t) => <MedalCell key={t} $tone={t}>2</MedalCell>)}
                </TableRow>
              ))}
              {/* Top sliver of the next row */}
              <TableRow>
                <NameCell />
                {medalTones.map((t) => <MedalCell key={t} $tone={t} />)}
              </TableRow>
            </MedalTable>
            <TableTrack><TableThumb /></TableTrack>
          </TableCard>
        </MapPanel>

        <Nav>
          {navItems.map((n) => <NavItem key={n} $active={n === "Country"}>{n}</NavItem>)}
        </Nav>
      </Page>
    </>
  );
}
